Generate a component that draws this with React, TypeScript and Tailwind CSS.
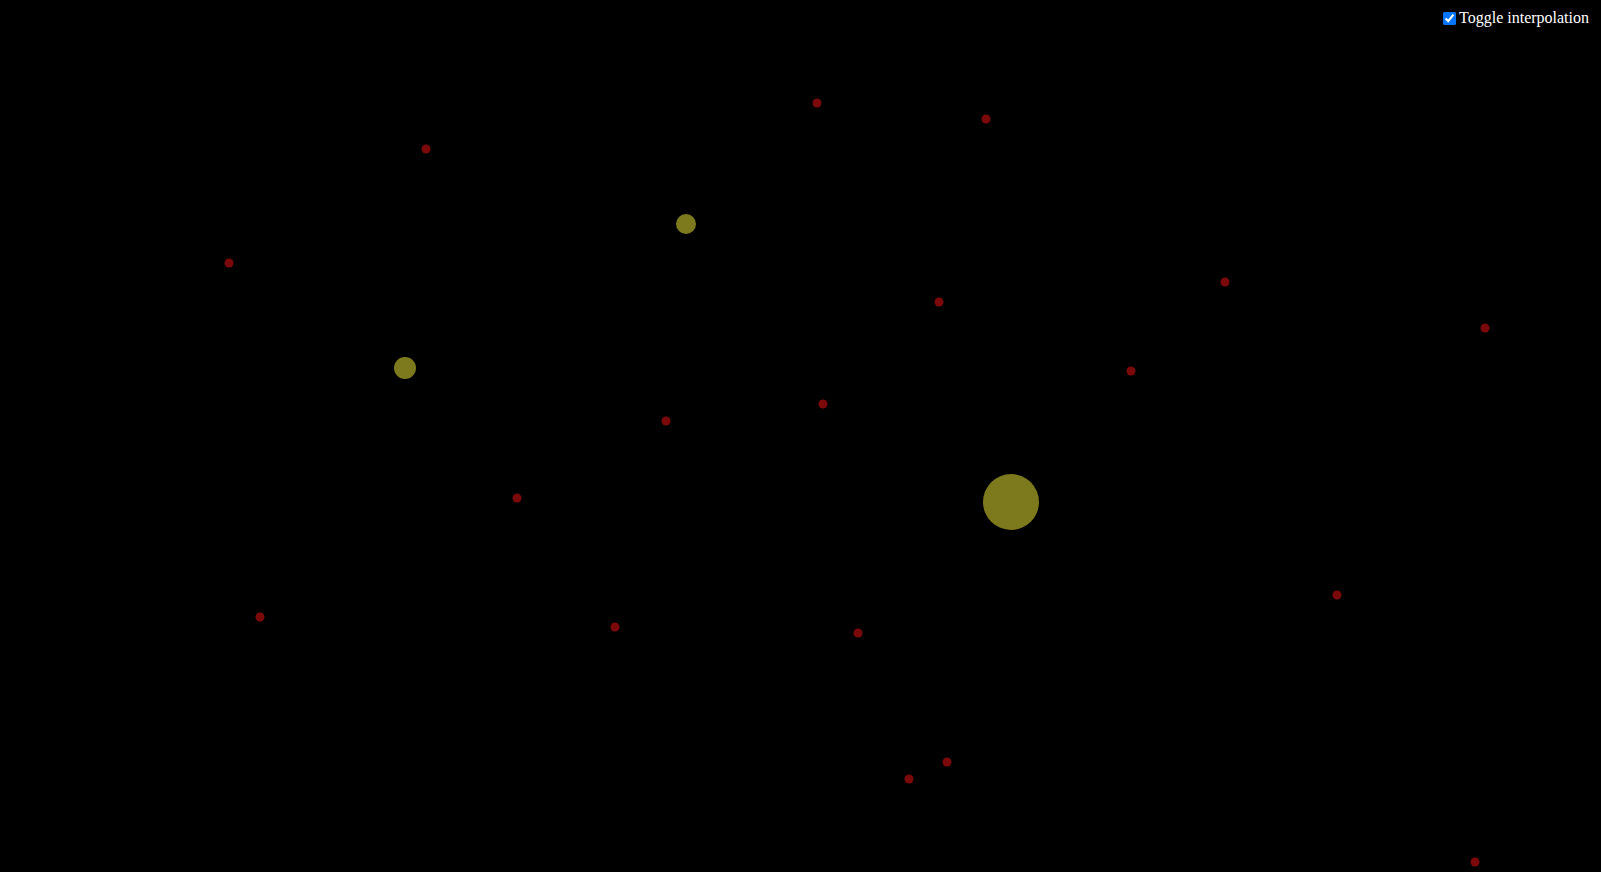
import { useState } from "react";

const dots: [number, number][] = [
  [817, 103],
  [986, 119],
  [426, 149],
  [229, 263],
  [939, 302],
  [1225, 282],
  [1485, 328],
  [1131, 371],
  [823, 404],
  [666, 421],
  [517, 498],
  [260, 617],
  [615, 627],
  [858, 633],
  [1337, 595],
  [947, 762],
  [909, 779],
  [1475, 862],
];

const bodies: [number, number, number][] = [
  [686, 224, 10],
  [405, 368, 11],
  [1011, 502, 28],
];

export default function App() {
  const [interp, setInterp] = useState(true);

  return (
    <div className="relative h-screen w-full overflow-hidden bg-black">
      <svg className="block h-full w-full" viewBox="0 0 1601 872" preserveAspectRatio="xMinYMin slice">
        {dots.map(([x, y], i) => (
          <circle key={i} cx={x} cy={y} r={4.5} fill="#7c0909" />
        ))}
        {bodies.map(([x, y, r], i) => (
          <circle key={i} cx={x} cy={y} r={r} fill="#7d791d" />
        ))}
      </svg>
      <label className="absolute right-3 top-1.5 flex items-center text-base text-white [font-family:'Liberation_Serif',serif]">
        <input
          type="checkbox"
          checked={interp}
          onChange={(e) => setInterp(e.target.checked)}
          className="mx-[3px] my-[3px] ml-1"
        />
        Toggle interpolation
      </label>
    </div>
  );
}
